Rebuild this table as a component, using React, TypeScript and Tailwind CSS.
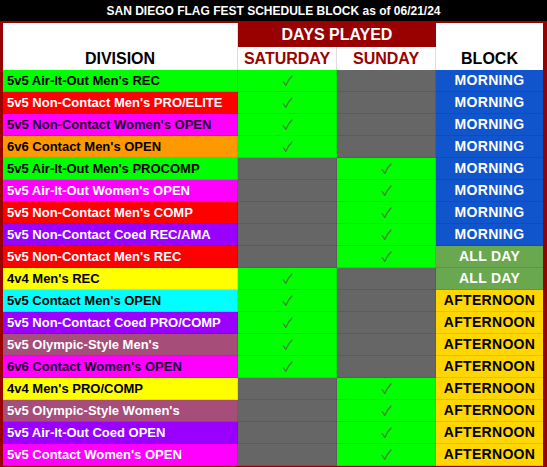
type Block = 'MORNING' | 'ALL DAY' | 'AFTERNOON'

interface Division {
  name: string
  bg: string
  text: string
  day: 'sat' | 'sun'
  block: Block
}

const divisions: Division[] = [
  { name: "5v5 Air-It-Out Men's REC", bg: 'bg-[#00ff00]', text: 'text-black', day: 'sat', block: 'MORNING' },
  { name: "5v5 Non-Contact Men's PRO/ELITE", bg: 'bg-[#ff0000]', text: 'text-white', day: 'sat', block: 'MORNING' },
  { name: "5v5 Non-Contact Women's OPEN", bg: 'bg-[#ff00ff]', text: 'text-[#14082e]', day: 'sat', block: 'MORNING' },
  { name: "6v6 Contact Men's OPEN", bg: 'bg-[#ff9900]', text: 'text-black', day: 'sat', block: 'MORNING' },
  { name: "5v5 Air-It-Out Men's PROCOMP", bg: 'bg-[#00ff00]', text: 'text-black', day: 'sun', block: 'MORNING' },
  { name: "5v5 Air-It-Out Women's OPEN", bg: 'bg-[#ff00ff]', text: 'text-white', day: 'sun', block: 'MORNING' },
  { name: "5v5 Non-Contact Men's COMP", bg: 'bg-[#ff0000]', text: 'text-white', day: 'sun', block: 'MORNING' },
  { name: '5v5 Non-Contact Coed REC/AMA', bg: 'bg-[#9900ff]', text: 'text-white', day: 'sun', block: 'MORNING' },
  { name: "5v5 Non-Contact Men's REC", bg: 'bg-[#ff0000]', text: 'text-white', day: 'sun', block: 'ALL DAY' },
  { name: "4v4 Men's REC", bg: 'bg-[#ffff00]', text: 'text-black', day: 'sat', block: 'ALL DAY' },
  { name: "5v5 Contact Men's OPEN", bg: 'bg-[#00ffff]', text: 'text-black', day: 'sat', block: 'AFTERNOON' },
  { name: '5v5 Non-Contact Coed PRO/COMP', bg: 'bg-[#9900ff]', text: 'text-white', day: 'sat', block: 'AFTERNOON' },
  { name: "5v5 Olympic-Style Men's", bg: 'bg-[#a64d79]', text: 'text-white', day: 'sat', block: 'AFTERNOON' },
  { name: "6v6 Contact Women's OPEN", bg: 'bg-[#ff00ff]', text: 'text-[#14082e]', day: 'sat', block: 'AFTERNOON' },
  { name: "4v4 Men's PRO/COMP", bg: 'bg-[#ffff00]', text: 'text-black', day: 'sun', block: 'AFTERNOON' },
  { name: "5v5 Olympic-Style Women's", bg: 'bg-[#a64d79]', text: 'text-white', day: 'sun', block: 'AFTERNOON' },
  { name: '5v5 Air-It-Out Coed OPEN', bg: 'bg-[#9900ff]', text: 'text-white', day: 'sun', block: 'AFTERNOON' },
  { name: "5v5 Contact Women's OPEN", bg: 'bg-[#ff00ff]', text: 'text-white', day: 'sun', block: 'AFTERNOON' },
]

const blockStyle: Record<Block, string> = {
  MORNING: 'bg-[#1155cc] text-white tracking-[0.3px]',
  'ALL DAY': 'bg-[#6aa84f] text-white tracking-[0.3px]',
  AFTERNOON: 'bg-[#ffd600] text-black tracking-[0.3px]',
}

function Check() {
  return (
    <svg width="11" height="12" viewBox="0 0 11 12" fill="none" stroke="#4a7f3c" strokeWidth="1.3" strokeLinecap="round" strokeLinejoin="round">
      <path d="M1.2 6.6 L3.8 10.4 Q6 5 10 1" />
    </svg>
  )
}

function DayCell({ played }: { played: boolean }) {
  return (
    <div className={`flex items-center justify-center border-b border-r border-black/10 ${played ? 'bg-[#00ff00]' : 'bg-[#666666]'}`}>
      {played && <Check />}
    </div>
  )
}

const cols = 'grid grid-cols-[235px_99px_99px_107px]'

export default function App() {
  return (
    <div className="w-[547px] h-[467px] overflow-hidden bg-white font-['Liberation_Sans',Arial,sans-serif]">
      {/* Title bar */}
      <div className="h-[21px] bg-black flex items-center justify-center text-white font-bold text-[12px]">
        SAN DIEGO FLAG FEST SCHEDULE BLOCK as of 06/21/24
      </div>

      <div className="border-[#990000] border-t-2 border-l-[3px] border-r-4 border-b-2">
        {/* Header */}
        <div className={`${cols} grid-rows-[24px_23px]`}>
          <div className="row-span-2 flex items-end justify-center leading-[22px] border-r border-[#dddddd] text-[16px] font-bold text-black">
            DIVISION
          </div>
          <div className="col-span-2 bg-[#990000] flex items-center justify-center text-white text-[16px] font-bold">
            DAYS PLAYED
          </div>
          <div className="row-span-2 flex items-end justify-center leading-[22px] text-[16px] font-bold text-black">
            BLOCK
          </div>
          <div className="flex items-center justify-center border-r border-[#dddddd] text-[#990000] text-[16px] font-bold">
            SATURDAY
          </div>
          <div className="flex items-center justify-center border-r border-[#dddddd] text-[#990000] text-[16px] font-bold">
            SUNDAY
          </div>
        </div>

        {/* Rows */}
        {divisions.map((d, i) => (
          <div key={i} className={`${cols} h-[22px]`}>
            <div className={`${d.bg} ${d.text} flex items-center pl-[4px] text-[13px] font-bold whitespace-nowrap border-b border-r border-black/10`}>
              {d.name}
            </div>
            <DayCell played={d.day === 'sat'} />
            <DayCell played={d.day === 'sun'} />
            <div className={`${blockStyle[d.block]} flex items-center justify-center text-[14px] font-bold border-b border-black/10`}>
              {d.block}
            </div>
          </div>
        ))}
      </div>
    </div>
  )
}
